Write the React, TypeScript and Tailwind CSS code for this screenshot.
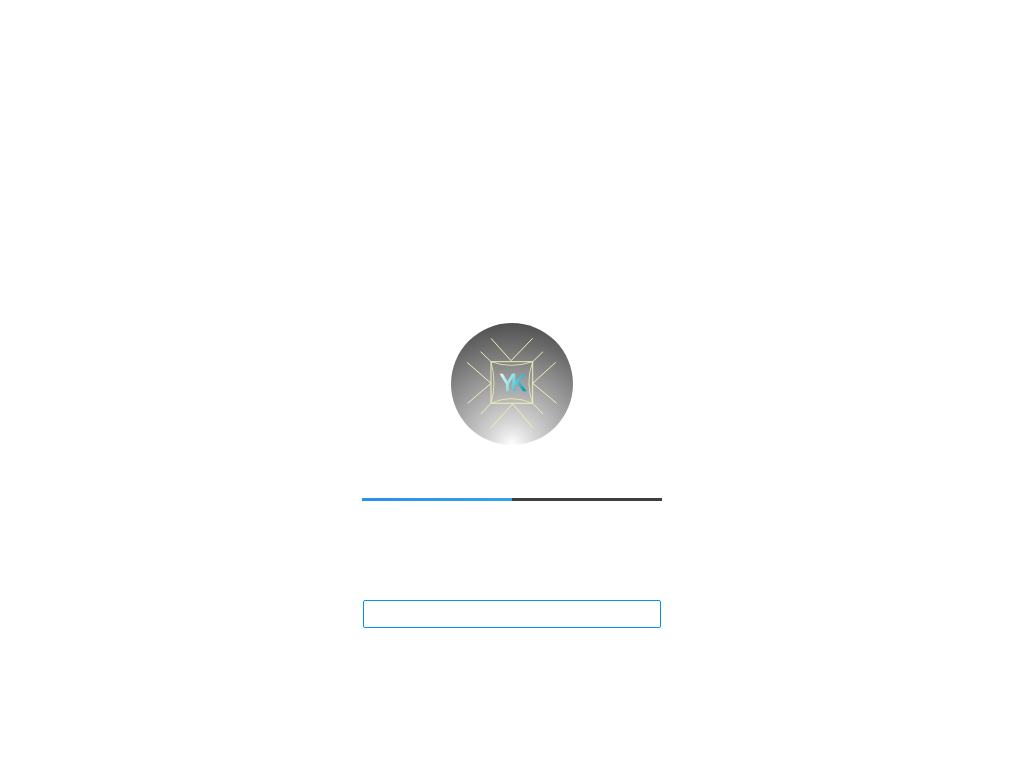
import React from 'react';

const Logo: React.FC = () => (
  <svg width="122" height="122" viewBox="0 0 122 122" className="block rounded-full">
    <defs>
      <linearGradient id="yk" x1="0" y1="0" x2="1" y2="0.4">
        <stop offset="0%" stopColor="#f2fdfd" />
        <stop offset="45%" stopColor="#9be6ea" />
        <stop offset="100%" stopColor="#06a3b8" />
      </linearGradient>
      <filter id="soft" x="-20%" y="-20%" width="140%" height="140%">
        <feGaussianBlur stdDeviation="0.4" />
      </filter>
    </defs>
    <g fill="none" stroke="#f0f0b8" strokeWidth="1">
      <path d="M40 15.3 60 37.7 81.7 15.3" />
      <path d="M40.3 104.3 61.7 81 81.7 104.3" />
      <path d="M16 39.3 40 60.3 16.7 80.3" />
      <path d="M104.7 39.3 81.7 60.3 105.7 80.3" />
      <path d="M29.7 28.7 40 38.7M92 28.7 81.7 38.7M29.7 91 40 80.3M92 91 81.7 80.3" />
      <path d="M40 38.7H81.7V80.3H40Z" />
      <path d="M40 38.7Q60 46 81.7 38.7Q74 60 81.7 80.3Q60 71 40 80.3Q46 60 40 38.7Z" strokeWidth="0.8" />
    </g>
    <text
      x="60"
      y="68"
      textAnchor="middle"
      fontFamily="'Liberation Sans', sans-serif"
      fontSize="23"
      letterSpacing="-4"
      fill="url(#yk)"
      stroke="url(#yk)"
      strokeWidth="0.7"
      filter="url(#soft)"
    >
      YK
    </text>
  </svg>
);

export default function App() {
  return (
    <div className="min-h-[768px] bg-white flex flex-col items-center pt-[323px]">
      <div className="w-[122px] h-[122px] rounded-full bg-[radial-gradient(circle_at_50%_100%,#ffffff_0%,#d4d4d4_18%,#a2a2a2_45%,#4c4c4c_92%)]">
        <Logo />
      </div>
      <div className="mt-[53px] w-[300px] h-[3px] bg-[#3f3f3f]">
        <div className="w-1/2 h-full bg-[linear-gradient(90deg,#2b8fe6,#36a3ec)]" />
      </div>
      <input
        type="text"
        className="mt-[99px] w-[298px] h-[28px] rounded-[2px] border border-[#0095f0] bg-white outline-none"
      />
    </div>
  );
}
